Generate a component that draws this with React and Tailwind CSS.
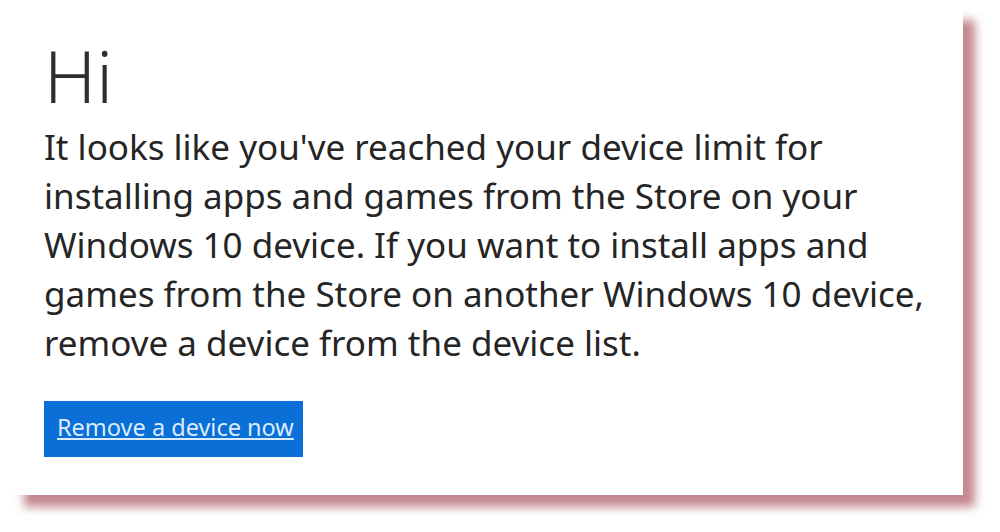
import React from "react";

const lines = [
  "It looks like you've reached your device limit for",
  "installing apps and games from the Store on your",
  "Windows 10 device. If you want to install apps and",
  "games from the Store on another Windows 10 device,",
  "remove a device from the device list.",
];

const App = () => {
  return (
    <div className="w-[1000px] h-[532px] bg-white overflow-hidden pt-[8px] pl-[12px]" style={{ fontFamily: "'Noto Sans', 'Open Sans', sans-serif" }}>
      <div className="w-[951px] h-[487px] bg-white shadow-[12px_12px_9px_rgba(175,90,100,0.72)] pl-[32px] pt-[22px]">
        <h1 className="text-[72px] leading-[90px] font-light text-[#2e2e2e]">Hi</h1>
        <p className="text-[35px] leading-[49px] text-[#252525] mt-[2px]">
          {lines.map((l) => (
            <span key={l} className="block whitespace-nowrap">{l}</span>
          ))}
        </p>
        <a
          href="#"
          className="mt-[34px] flex items-center w-[259px] h-[56px] bg-[#0a6fd6] pl-[13px] pb-[2px] text-[23.5px] text-[#dcecff] underline"
        >
          Remove a device now
        </a>
      </div>
    </div>
  );
};

export default App;
